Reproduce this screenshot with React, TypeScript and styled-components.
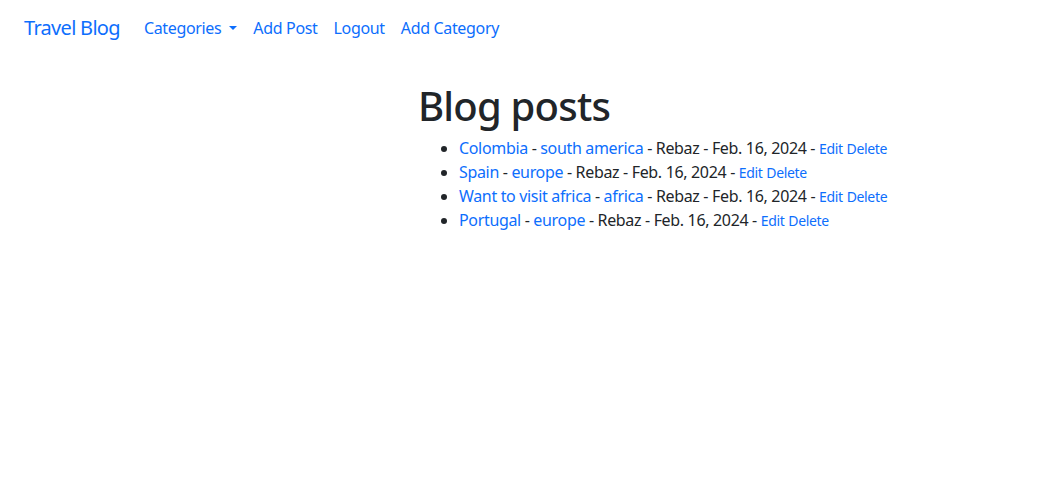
import React from "react";
import styled, { createGlobalStyle } from "styled-components";

const Global = createGlobalStyle`
  html, body { margin: 0; padding: 0; background: #fff; }
  body {
    font-family: "Noto Sans", "Open Sans", sans-serif;
    font-size: 16px;
    line-height: 1.5;
    letter-spacing: -0.021em;
    color: #212529;
  }
  * { box-sizing: border-box; }
`;

const Navbar = styled.nav`
  display: flex;
  align-items: center;
  padding: 8px 24px;
`;

const Brand = styled.a`
  font-size: 20px;
  line-height: 30px;
  padding: 5px 0;
  margin-right: 16px;
  letter-spacing: -0.035em;
  color: #0d6efd;
  text-decoration: none;
`;

const NavList = styled.ul`
  display: flex;
  list-style: none;
  margin: 0;
  padding: 0;
`;

const NavLink = styled.a<{ $toggle?: boolean }>`
  display: flex;
  align-items: center;
  padding: 8px;
  color: #0d6efd;
  text-decoration: none;
  line-height: 24px;
  ${(p) =>
    p.$toggle &&
    `
    &::after {
      content: "";
      display: inline-block;
      margin-left: 0.5em;
      border-top: 0.3em solid;
      border-right: 0.3em solid transparent;
      border-left: 0.3em solid transparent;
      border-bottom: 0;
    }
  `}
`;

const Main = styled.main`
  padding: 26px 0 0 418px;
`;

const Title = styled.h1`
  font-size: 40px;
  font-weight: 500;
  line-height: 1.2;
  letter-spacing: -0.02em;
  margin: 0 0 6px;
`;

const Posts = styled.ul`
  margin: 0;
  padding-left: 41px;
`;

const Post = styled.li`
  line-height: 24px;
`;

const Link = styled.a`
  color: #0d6efd;
  text-decoration: none;
`;

const SmallLink = styled.a`
  color: #0d6efd;
  text-decoration: none;
  font-size: 14px;
  line-height: 1;
`;

const posts = [
  { title: "Colombia", cat: "south america" },
  { title: "Spain", cat: "europe" },
  { title: "Want to visit africa", cat: "africa" },
  { title: "Portugal", cat: "europe" },
];

export default function App() {
  return (
    <>
      <Global />
      <Navbar>
        <Brand href="#">Travel Blog</Brand>
        <NavList>
          <li><NavLink href="#" $toggle>Categories</NavLink></li>
          <li><NavLink href="#">Add Post</NavLink></li>
          <li><NavLink href="#">Logout</NavLink></li>
          <li><NavLink href="#">Add Category</NavLink></li>
        </NavList>
      </Navbar>
      <Main>
        <Title>Blog posts</Title>
        <Posts>
          {posts.map((p) => (
            <Post key={p.title}>
              <Link href="#">{p.title}</Link> - <Link href="#">{p.cat}</Link> - Rebaz - Feb. 16, 2024 -{" "}
              <SmallLink href="#">Edit</SmallLink> <SmallLink href="#">Delete</SmallLink>
            </Post>
          ))}
        </Posts>
      </Main>
    </>
  );
}
